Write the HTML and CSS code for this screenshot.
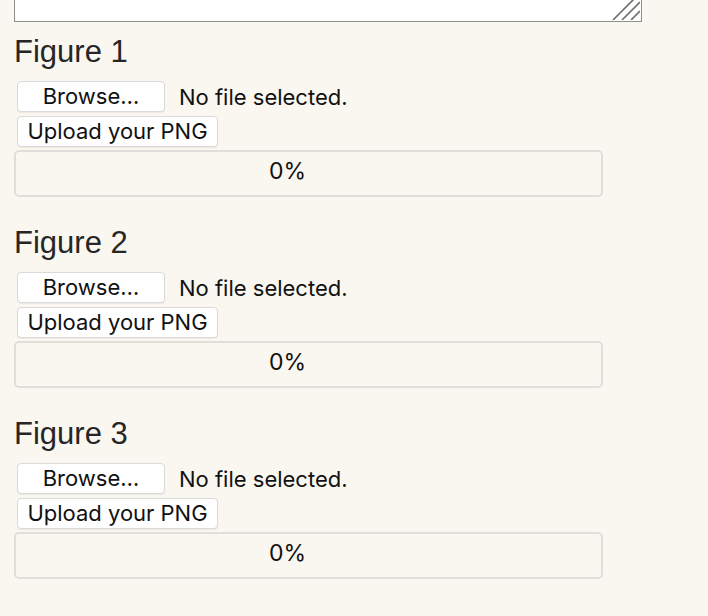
FILE: index.html
```html
<!DOCTYPE html>
<html>
<head>
<meta charset="utf-8">
<link rel="stylesheet" href="styles.css">
</head>
<body>
<div class="page">
  <div class="textarea">
    <svg class="grip" width="28" height="28" viewBox="0 0 28 28">
      <line x1="1" y1="28" x2="28" y2="1" />
      <line x1="10" y1="28" x2="28" y2="10" />
      <line x1="19" y1="28" x2="28" y2="19" />
    </svg>
  </div>

  <section class="figure">
    <h2 class="title">Figure 1</h2>
    <div class="file-row">
      <button class="btn btn-browse">Browse…</button>
      <span class="file-label">No file selected.</span>
    </div>
    <button class="btn btn-upload">Upload your PNG</button>
    <div class="progress"><span class="pct">0%</span></div>
  </section>

  <section class="figure">
    <h2 class="title">Figure 2</h2>
    <div class="file-row">
      <button class="btn btn-browse">Browse…</button>
      <span class="file-label">No file selected.</span>
    </div>
    <button class="btn btn-upload">Upload your PNG</button>
    <div class="progress"><span class="pct">0%</span></div>
  </section>

  <section class="figure">
    <h2 class="title">Figure 3</h2>
    <div class="file-row">
      <button class="btn btn-browse">Browse…</button>
      <span class="file-label">No file selected.</span>
    </div>
    <button class="btn btn-upload">Upload your PNG</button>
    <div class="progress"><span class="pct">0%</span></div>
  </section>
</div>
</body>
</html>
```

FILE: styles.css
```css
html, body {
  margin: 0;
  padding: 0;
  background: #faf7f1;
}

body {
  font-family: "Liberation Sans", Arial, sans-serif;
  color: #222;
  overflow: hidden;
}

.page {
  padding-left: 14px;
  width: 628px;
}

.textarea {
  position: relative;
  box-sizing: border-box;
  height: 31px;
  margin-top: -9px;
  background: #fff;
  border: 1px solid #8f8f8f;
  overflow: hidden;
}

.grip {
  position: absolute;
  right: 1px;
  bottom: 1px;
}

.grip line {
  stroke: #6f6f6f;
  stroke-width: 1.7;
}

.figure {
  display: flex;
  flex-direction: column;
  align-items: flex-start;
  margin-top: 12px;
  margin-bottom: 28px;
}

.figure + .figure {
  margin-top: 0;
}

.title {
  margin: 0;
  font-family: "Liberation Sans", Arial, sans-serif;
  font-weight: normal;
  font-size: 31px;
  line-height: 36px;
  color: #262626;
}

.file-row {
  display: flex;
  align-items: center;
  margin-top: 11px;
}

.btn {
  box-sizing: border-box;
  height: 31px;
  margin: 0 0 0 3px;
  padding: 0;
  background: #fff;
  border: 1px solid #dadada;
  border-radius: 4px;
  box-shadow: 0 1px 1px rgba(0, 0, 0, 0.06);
  font-family: Inter, "Noto Sans", sans-serif;
  font-size: 22px;
  color: #111;
  text-align: center;
  line-height: 29px;
}

.btn-browse {
  width: 148px;
}

.btn-upload {
  width: 201px;
  margin-top: 4px;
}

.file-label {
  margin-left: 14px;
  font-family: Inter, "Noto Sans", sans-serif;
  font-size: 22px;
  color: #111;
}

.progress {
  box-sizing: border-box;
  width: 589px;
  height: 47px;
  margin-top: 3px;
  border: 2px solid #e0dedb;
  border-radius: 5px;
  padding-right: 42px;
  display: flex;
  align-items: center;
  justify-content: center;
}

.pct {
  font-family: Inter, "Noto Sans", sans-serif;
  font-size: 23px;
  color: #111;
  margin-top: -5px;
}
```
